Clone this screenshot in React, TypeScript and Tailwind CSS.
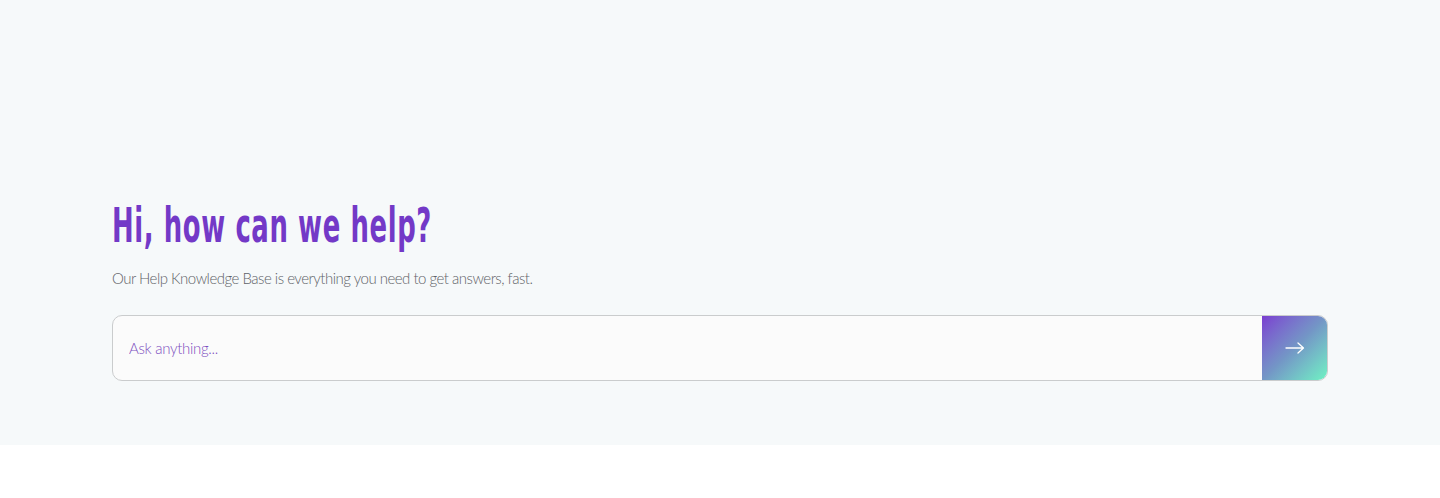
export default function App() {
  return (
    <div className="w-[1440px] h-[498px] bg-white font-['Lato',sans-serif]">
      <section className="bg-[#f6f9fa] h-[445px] px-[112px] pt-[196px]">
        <h1 className="text-[#7339c7] text-[48px] leading-[58px] font-bold tracking-[1px] font-['DejaVu_Sans_Condensed',sans-serif] origin-left scale-x-[0.6] whitespace-nowrap">
          Hi, how can we help?
        </h1>
        <p className="mt-[14px] text-[15px] leading-[20px] font-light tracking-[-0.5px] text-[#5f6368]">
          Our Help Knowledge Base is everything you need to get answers, fast.
        </p>
        <div className="mt-[27px] flex h-[66px] w-[1216px] rounded-[10px] border border-[#cacccd] bg-[#fbfbfb] overflow-hidden">
          <input
            type="text"
            placeholder="Ask anything..."
            className="flex-1 bg-transparent pl-[16px] text-[15px] font-light tracking-[-0.3px] text-[#7d4fc0] placeholder:text-[#7d4fc0] outline-none"
          />
          <button className="flex w-[65px] items-center justify-center bg-gradient-to-br from-[#7a3cd0] via-[#7396c6] to-[#6ef2c2]">
            <svg width="20" height="12" viewBox="0 0 20 12" fill="none" stroke="white" strokeWidth="1.3" strokeLinecap="round" strokeLinejoin="round">
              <path d="M1 6h17.5M13 1l5.5 5-5.5 5" />
            </svg>
          </button>
        </div>
      </section>
    </div>
  );
}
